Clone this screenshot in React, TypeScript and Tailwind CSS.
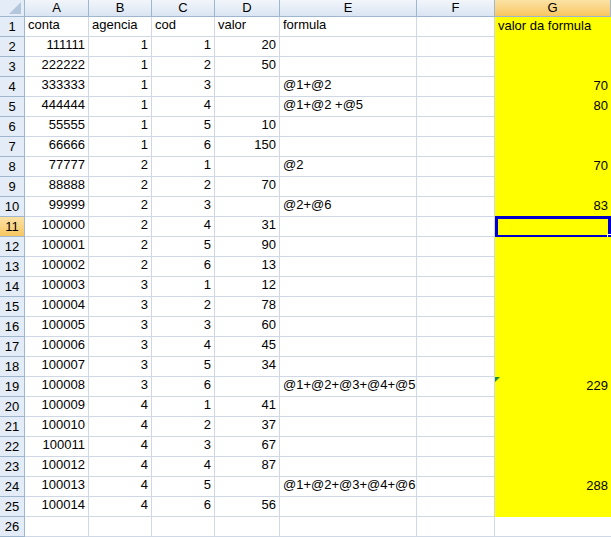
import React from "react";

const cols = ["A", "B", "C", "D", "E", "F", "G"];

const rows: (string | number)[][] = [
  ["conta", "agencia", "cod", "valor", "formula", "", "valor da formula"],
  [111111, 1, 1, 20, "", "", ""],
  [222222, 1, 2, 50, "", "", ""],
  [333333, 1, 3, "", "@1+@2", "", 70],
  [444444, 1, 4, "", "@1+@2 +@5", "", 80],
  [55555, 1, 5, 10, "", "", ""],
  [66666, 1, 6, 150, "", "", ""],
  [77777, 2, 1, "", "@2", "", 70],
  [88888, 2, 2, 70, "", "", ""],
  [99999, 2, 3, "", "@2+@6", "", 83],
  [100000, 2, 4, 31, "", "", ""],
  [100001, 2, 5, 90, "", "", ""],
  [100002, 2, 6, 13, "", "", ""],
  [100003, 3, 1, 12, "", "", ""],
  [100004, 3, 2, 78, "", "", ""],
  [100005, 3, 3, 60, "", "", ""],
  [100006, 3, 4, 45, "", "", ""],
  [100007, 3, 5, 34, "", "", ""],
  [100008, 3, 6, "", "@1+@2+@3+@4+@5", "", 229],
  [100009, 4, 1, 41, "", "", ""],
  [100010, 4, 2, 37, "", "", ""],
  [100011, 4, 3, 67, "", "", ""],
  [100012, 4, 4, 87, "", "", ""],
  [100013, 4, 5, "", "@1+@2+@3+@4+@6", "", 288],
  [100014, 4, 6, 56, "", "", ""],
  ["", "", "", "", "", "", ""],
];

const App = () => {
  return (
    <div
      className="w-[611px] h-[537px] overflow-hidden bg-white text-[13px] text-black"
      style={{ fontFamily: "'Liberation Sans', Arial, sans-serif" }}
    >
      <div className="grid grid-cols-[25px_64px_63px_63px_65px_137px_78px_116px] grid-rows-[17px_repeat(26,20px)]">
        {/* corner */}
        <div className="relative bg-[#e4ecf7] border-r border-b border-[#9eb6ce]">
          <div className="absolute right-[3px] bottom-[2px] w-0 h-0 border-l-[12px] border-l-transparent border-b-[12px] border-b-[#b4c6dc]" />
        </div>
        {cols.map((c) => (
          <div
            key={c}
            className={`flex items-center justify-center border-r border-b border-[#9eb6ce] ${
              c === "G" ? "bg-gradient-to-b from-[#fbe2a4] to-[#f8c65f]" : "bg-gradient-to-b from-[#f2f6fb] to-[#dae5f3]"
            }`}
          >
            {c}
          </div>
        ))}
        {rows.map((r, i) => {
          const n = i + 1;
          return (
            <React.Fragment key={n}>
              <div
                className={`flex items-center justify-center border-r border-b border-[#9eb6ce] ${
                  n === 11 ? "bg-gradient-to-b from-[#fbe2a4] to-[#f8c65f]" : "bg-[#e4ecf7]"
                }`}
              >
                {n}
              </div>
              {r.map((v, j) => {
                const isG = j === 6;
                const num = typeof v === "number";
                return (
                  <div
                    key={j}
                    className={`relative flex items-end pb-[2px] px-[3px] whitespace-nowrap ${
                      num ? "justify-end" : "justify-start"
                    } ${isG ? (n === 26 ? "bg-white border-b border-[#d0d7e5]" : "bg-[#ffff00]") : "border-r border-b border-[#d0d7e5]"}`}
                  >
                    {v}
                    {isG && n === 11 && (
                      <div className="absolute inset-x-0 -top-px -bottom-px border-[3px] border-[#0000cc]">
                        <div className="absolute -right-[4px] -bottom-[4px] w-[5px] h-[5px] bg-[#0000cc] border border-white" />
                      </div>
                    )}
                    {isG && n === 19 && (
                      <div className="absolute left-0 top-0 w-0 h-0 border-t-[5px] border-t-[#1e8c3a] border-r-[5px] border-r-transparent" />
                    )}
                  </div>
                );
              })}
            </React.Fragment>
          );
        })}
      </div>
    </div>
  );
};

export default App;
